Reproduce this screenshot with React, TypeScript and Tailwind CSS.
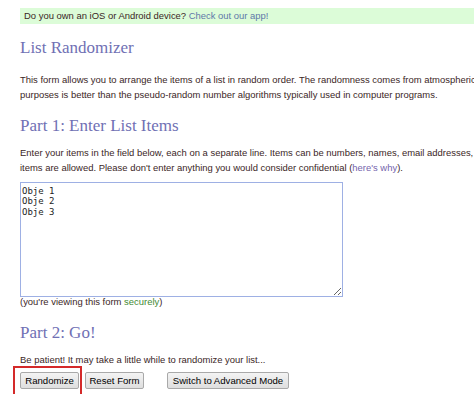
export default function App() {
  const text = "text-[#3b2626]";
  return (
    <div className={`w-[474px] h-[394px] overflow-hidden bg-white pt-2 pl-5 font-['Liberation_Sans',Arial,sans-serif] text-[9.45px] ${text}`}>
      <div className="h-4 w-[470px] bg-[#dcfcd8] pl-1 leading-4 whitespace-nowrap">
        Do you own an iOS or Android device? <span className="text-[#5f78a8]">Check out our app!</span>
      </div>

      <h1 className="mt-[15px] font-['Liberation_Serif',Georgia,serif] text-[17px] leading-[18px] text-[#7070b4]">List Randomizer</h1>

      <p className="mt-[16px] w-[520px] leading-[14.5px] whitespace-nowrap">
        This form allows you to arrange the items of a list in random order. The randomness comes from atmospheric noise, which for many
        <br />
        purposes is better than the pseudo-random number algorithms typically used in computer programs.
      </p>

      <h2 className="mt-[15px] font-['Liberation_Serif',Georgia,serif] text-[17px] leading-[18px] text-[#7070b4]">Part 1: Enter List Items</h2>

      <p className="mt-[11px] w-[520px] leading-[14.5px] whitespace-nowrap">
        Enter your items in the field below, each on a separate line. Items can be numbers, names, email addresses, etc. A maximum of 10,000
        <br />
        items are allowed. Please don't enter anything you would consider confidential (<span className="text-[#7464ac]">here's why</span>).
      </p>

      <textarea
        className="mt-[7px] block h-[115px] w-[323px] resize border border-[#9eb0e4] bg-white px-[1px] py-[3px] font-['DejaVu_Sans_Mono','Liberation_Mono',monospace] text-[9px] leading-[10.3px] text-[#222] outline-none"
        defaultValue={"Obje 1\nObje 2\nObje 3"}
      />

      <p className="mt-[-1px] leading-[12px]">
        (you're viewing this form <span className="text-[#3f8a34]">securely</span>)
      </p>

      <h2 className="mt-[16px] font-['Liberation_Serif',Georgia,serif] text-[17px] leading-[18px] text-[#7070b4]">Part 2: Go!</h2>

      <p className="mt-[12px] leading-[12px]">
        Be patient! It may take a little while to randomize your list...
      </p>

      <div className="mt-[6px] flex items-center font-['Liberation_Sans',Arial,sans-serif] text-[9.6px] text-black">
        <span className="relative">
          <button className="h-[17px] w-[59px] rounded-[2px] border border-[#a9a9a9] bg-gradient-to-b from-[#f4f4f4] to-[#dedede] leading-[15px]">Randomize</button>
          <span className="pointer-events-none absolute left-[-7px] top-[-6px] h-[30px] w-[69px] border-2 border-[#d42a2a]" />
        </span>
        <button className="ml-[6px] h-[17px] w-[59px] rounded-[2px] border border-[#a9a9a9] bg-gradient-to-b from-[#f4f4f4] to-[#dedede] leading-[15px]">Reset Form</button>
        <button className="ml-[23px] h-[17px] w-[122px] rounded-[2px] border border-[#a9a9a9] bg-gradient-to-b from-[#f4f4f4] to-[#dedede] leading-[15px]">Switch to Advanced Mode</button>
      </div>
    </div>
  );
}
